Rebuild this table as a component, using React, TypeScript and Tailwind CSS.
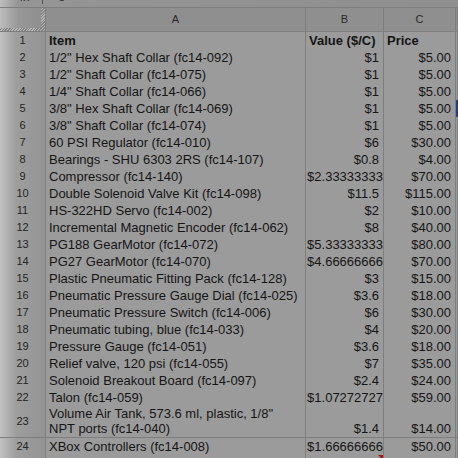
import React from "react";

type Row = { n: string; a: string; b: string; c: string; tall?: boolean; bold?: boolean };

const rows: Row[] = [
  { n: "1", a: "Item", b: "Value ($/C)", c: "Price", bold: true },
  { n: "2", a: '1/2" Hex Shaft Collar (fc14-092)', b: "$1", c: "$5.00" },
  { n: "3", a: '1/2" Shaft Collar (fc14-075)', b: "$1", c: "$5.00" },
  { n: "4", a: '1/4" Shaft Collar (fc14-066)', b: "$1", c: "$5.00" },
  { n: "5", a: '3/8" Hex Shaft Collar (fc14-069)', b: "$1", c: "$5.00" },
  { n: "6", a: '3/8" Shaft Collar (fc14-074)', b: "$1", c: "$5.00" },
  { n: "7", a: "60 PSI Regulator (fc14-010)", b: "$6", c: "$30.00" },
  { n: "8", a: "Bearings - SHU 6303 2RS (fc14-107)", b: "$0.8", c: "$4.00" },
  { n: "9", a: "Compressor (fc14-140)", b: "$2.33333333", c: "$70.00" },
  { n: "10", a: "Double Solenoid Valve Kit (fc14-098)", b: "$11.5", c: "$115.00" },
  { n: "11", a: "HS-322HD Servo (fc14-002)", b: "$2", c: "$10.00" },
  { n: "12", a: "Incremental Magnetic Encoder (fc14-062)", b: "$8", c: "$40.00" },
  { n: "13", a: "PG188 GearMotor (fc14-072)", b: "$5.33333333", c: "$80.00" },
  { n: "14", a: "PG27 GearMotor (fc14-070)", b: "$4.66666666", c: "$70.00" },
  { n: "15", a: "Plastic Pneumatic Fitting Pack (fc14-128)", b: "$3", c: "$15.00" },
  { n: "16", a: "Pneumatic Pressure Gauge Dial (fc14-025)", b: "$3.6", c: "$18.00" },
  { n: "17", a: "Pneumatic Pressure Switch (fc14-006)", b: "$6", c: "$30.00" },
  { n: "18", a: "Pneumatic tubing, blue (fc14-033)", b: "$4", c: "$20.00" },
  { n: "19", a: "Pressure Gauge (fc14-051)", b: "$3.6", c: "$18.00" },
  { n: "20", a: "Relief valve, 120 psi (fc14-055)", b: "$7", c: "$35.00" },
  { n: "21", a: "Solenoid Breakout Board (fc14-097)", b: "$2.4", c: "$24.00" },
  { n: "22", a: "Talon (fc14-059)", b: "$1.07272727", c: "$59.00" },
  { n: "23", a: 'Volume Air Tank, 573.6 ml, plastic, 1/8" NPT ports (fc14-040)', b: "$1.4", c: "$14.00", tall: true },
  { n: "24", a: "XBox Controllers (fc14-008)", b: "$1.66666666", c: "$50.00" },
];

const grid = "grid grid-cols-[46px_260px_78px_72px_1fr]";
const cell = "border-r border-b border-[#7e7e7e] bg-[#9b9b9b] flex items-end leading-[15px] overflow-hidden";
const rowHead =
  "border-r border-b border-[#7e7e7e] bg-[linear-gradient(to_right,#c2c2c2,#9e9e9e_16px,#939393)] flex items-center justify-center text-[11px] text-[#242424]";

export default function App() {
  return (
    <div className="w-[458px] h-[458px] overflow-hidden bg-[#9b9b9b] text-[13px] text-[#151515] font-['Liberation_Sans',Arial,sans-serif]">
      {/* formula bar remnant */}
      <div className="h-[8px] border-b border-[#7e7e7e] bg-[linear-gradient(to_right,#bdbdbd,#959595_18px,#8f8f8f)] overflow-hidden flex">
        <div className="w-[46px] relative flex justify-center">
          <span className="-mt-[10px] italic text-[#333] text-[12px] leading-[14px] pl-[4px]">fx</span>
          <span className="absolute right-[3px] top-0 w-px h-[4px] bg-[#555]" />
        </div>
        <span className="-mt-[10px] ml-[12px] text-[13px] leading-[14px] text-[#333]">o</span>
      </div>

      {/* column header */}
      <div className={`${grid} h-[24px]`}>
        <div className="border-b border-r border-[#7e7e7e] bg-[repeating-linear-gradient(135deg,#b4b4b4_0px,#b4b4b4_1px,#858585_1px,#858585_2px)] flex flex-col">
          <div className="flex-1 mr-[4px] mb-[3px] bg-[linear-gradient(to_right,#bdbdbd,#989898_18px,#8f8f8f)]" />
        </div>
        {["A", "B", "C", ""].map((l, i) => (
          <div
            key={i}
            className="border-r border-b border-[#7e7e7e] bg-[#8f8f8f] flex items-center justify-center text-[11px] text-[#2a2a2a]"
          >
            {l}
          </div>
        ))}
      </div>

      {rows.map((r) => {
        const h = r.tall ? "h-[32px]" : "h-[17px]";
        const sel = r.n === "5";
        return (
          <div key={r.n} className={`${grid} ${h}`}>
            <div className={`${rowHead} ${sel ? "bg-[linear-gradient(to_right,#b0b0b0,#8a8a8a_16px,#838383)]" : ""}`}>{r.n}</div>
            <div className={`${cell} px-[3px] ${r.bold ? "font-bold" : ""} ${r.tall ? "whitespace-normal" : "whitespace-nowrap"}`}>
              <span className="pb-[1px]">{r.a}</span>
            </div>
            <div
              className={`${cell} whitespace-nowrap ${r.bold ? "font-bold px-[3px] justify-start" : r.b.length > 8 ? "justify-end pr-[0px]" : "justify-end pr-[4px]"}`}
            >
              <span className="pb-[1px]">{r.b}</span>
            </div>
            <div className={`${cell} whitespace-nowrap ${r.bold ? "font-bold px-[3px] justify-start" : "justify-end pr-[4px]"}`}>
              <span className="pb-[1px]">{r.c}</span>
            </div>
            <div className={`${cell} ${sel ? "border-l-2 border-t-2 border-l-[#253f7a] border-t-[#253f7a]" : ""}`} />
          </div>
        );
      })}

      {/* partial row 25 */}
      <div className={`${grid} h-[17px]`}>
        <div className={rowHead} />
        <div className={cell} />
        <div className={`${cell} relative`}>
          <span className="absolute right-0 top-0 w-0 h-0 border-l-[5px] border-l-transparent border-t-[5px] border-t-[#b01010]" />
        </div>
        <div className={cell} />
        <div className={cell} />
      </div>
    </div>
  );
}
